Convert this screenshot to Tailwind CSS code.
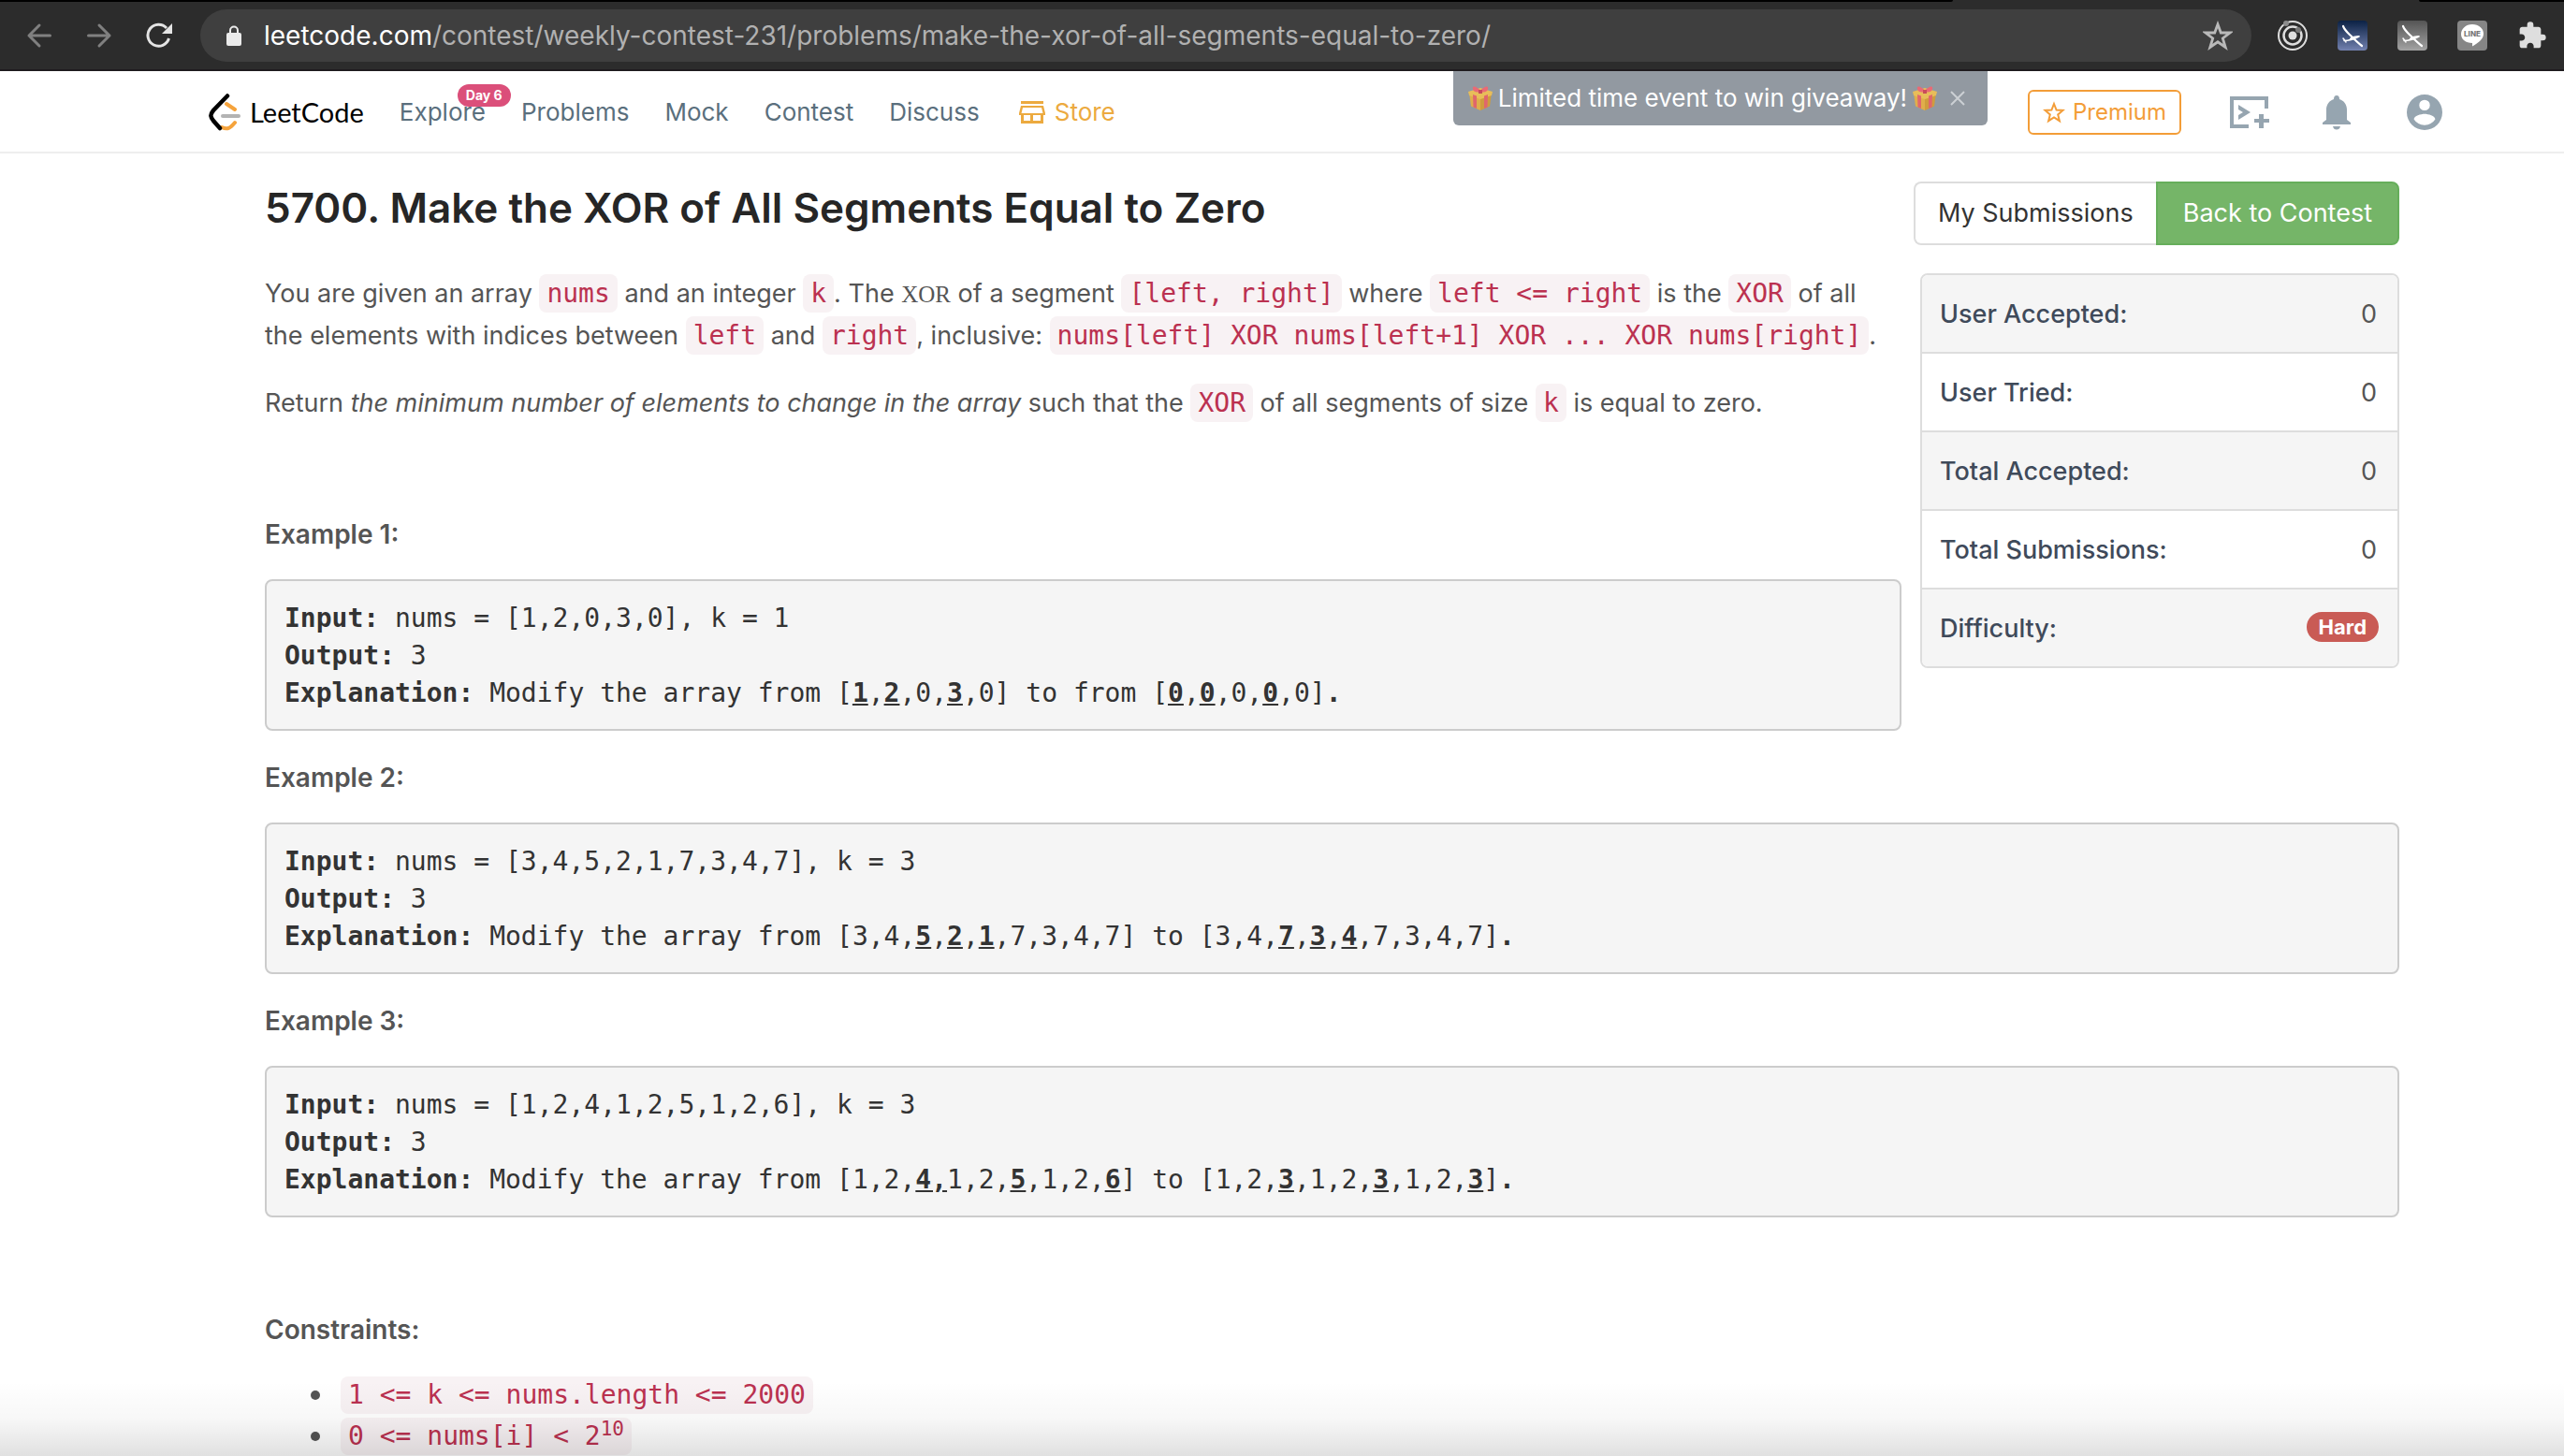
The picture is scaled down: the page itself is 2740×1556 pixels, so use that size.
<!DOCTYPE html>
<html lang="en">
<head>
<meta charset="utf-8">
<title>Make the XOR of All Segments Equal to Zero - LeetCode</title>
<script src="https://cdn.jsdelivr.net/npm/@tailwindcss/browser@4"></script>
</head>
<body class="relative flex h-screen flex-col overflow-hidden bg-white font-['Inter',sans-serif] text-[27px] leading-[44px] text-[#555]">

<svg class="hidden" aria-hidden="true">
  <symbol id="gift" viewBox="0 0 26 26">
    <path d="M1 7 13 11v15L3 21.500z" fill="#dfae4b"/>
    <path d="M25 7 13 11v15l10-4.500z" fill="#cf9c3d"/>
    <path d="M0 6 13 2l13 4-1 4-12 4L1 10z" fill="#e8bd59"/>
    <path d="m5 9 4 1.500v13.500l-3.500-1.500zM21 9l-4 1.500v13.500l3.500-1.500z" fill="#e0666c"/>
    <path d="M13 5C9 0 4-1 5 3c0 3 4 4 8 3 4 1 8 0 8-3 1-4-4-3-8 2z" fill="#ea6a75"/>
    <path d="M11 4h4v4h-4z" fill="#c94c5b"/>
  </symbol>
  <symbol id="glider" viewBox="0 0 32 32">
    <path d="M6 6c2 5 5 7 9 11 4 4 7 7 11 10" fill="none" stroke="#fff" stroke-width="2.200" stroke-linecap="round"/>
    <path d="M6 19l3 4M7 21.500c6 0 11-2 16-4.500" fill="none" stroke="#fff" stroke-width="1.500" stroke-linecap="round"/>
    <path d="M13 19c2-2 6-3 11-3-3 3-7 5-11 4.500z" fill="#fff"/>
  </symbol>
</svg>

<!-- Browser toolbar -->
<div class="relative flex h-[76px] shrink-0 items-center border-b-2 border-[#1f1c1f] bg-[#2c2c2c] pt-[2px] pr-[18px] pl-[28px]">
  <div class="absolute inset-x-0 top-0 flex h-[2px] justify-between">
    <div class="w-[2087px] rounded-br bg-black"></div>
    <div class="w-[155px] rounded-bl bg-black"></div>
  </div>
  <button aria-label="Back" class="mr-9"><svg class="size-7" viewBox="0 0 28 28" fill="none" stroke="#808080" stroke-width="3" stroke-linecap="round" stroke-linejoin="round"><path d="M25.500 14H3M14 3 3 14l11 11"/></svg></button>
  <button aria-label="Forward" class="mr-9"><svg class="size-7" viewBox="0 0 28 28" fill="none" stroke="#808080" stroke-width="3" stroke-linecap="round" stroke-linejoin="round"><path d="M2.500 14H25M14 3l11 11-11 11"/></svg></button>
  <button aria-label="Reload" class="mr-[30px]"><svg class="size-7" viewBox="0 0 28 28"><path d="M24.500 17A11.500 11.500 0 1 1 22 6" fill="none" stroke="#e4e4e4" stroke-width="3"/><path d="M28 1v11H17z" fill="#e4e4e4"/></svg></button>
  <div class="flex h-14 flex-1 items-center rounded-full bg-[#3f3f3f] pr-5 pl-7">
    <svg class="mr-6 h-[22px] w-4" viewBox="0 0 16 22"><path d="M4 9V5.500a4 4 0 0 1 8 0V9" fill="none" stroke="#ebebeb" stroke-width="2"/><rect y="8" width="16" height="14" rx="2" fill="#ebebeb"/></svg>
    <p class="flex-1 text-[28px] text-[#b1b1b1]"><span class="text-white">leetcode.com</span>/contest/weekly-contest-231/problems/make-the-xor-of-all-segments-equal-to-zero/</p>
    <button aria-label="Bookmark"><svg class="size-8" viewBox="0 0 32 32"><path d="m16 4 3.300 9H29l-7.700 6 2.900 9.500L16 22.800l-8.200 5.700 2.900-9.500L3 13h9.700z" fill="none" stroke="#b9b9b9" stroke-width="2.800"/></svg></button>
  </div>
  <div class="ml-7 flex items-center gap-8">
    <svg class="size-8" viewBox="0 0 32 32"><g fill="none" stroke="#dedede" stroke-width="2"><circle cx="16" cy="16" r="15"/><circle cx="16" cy="16" r="9.500" stroke-width="2.500"/></g><circle cx="16" cy="16" r="4.500" fill="#dedede"/><circle cx="9" cy="3" r="3" fill="#8b8b8b"/><circle cx="22" cy="10" r="3" fill="#777"/></svg>
    <svg class="size-8 rounded bg-linear-to-b from-[#0b2245] to-[#7482b0]"><use href="#glider"/></svg>
    <svg class="size-8 rounded bg-linear-to-b from-[#555] to-[#a3a3a3]"><use href="#glider"/></svg>
    <div class="relative size-8 rounded bg-[#868686]">
      <svg class="size-8" viewBox="0 0 32 32"><path d="M16 4c7 0 12 4.500 12 10 0 6-6 10-12 13.500V24C9 24 4 20 4 14.500 4 9 9 4 16 4z" fill="#fff"/></svg>
      <span class="absolute inset-x-0 top-2 text-center text-[8px] leading-3 font-extrabold text-[#777]">LINE</span>
    </div>
    <svg class="size-8" viewBox="0 0 24 24" fill="#dedede"><path d="M20.500 11H19V7c0-1.100-.9-2-2-2h-4V3.500a2.500 2.500 0 0 0-5 0V5H4c-1.100 0-2 .9-2 2v3.800h1.500c1.500 0 2.700 1.200 2.700 2.700S5 16.200 3.500 16.200H2V20c0 1.100.9 2 2 2h3.800v-1.500c0-1.500 1.200-2.700 2.700-2.700s2.700 1.200 2.700 2.700V22H17c1.100 0 2-.9 2-2v-4h1.500a2.500 2.500 0 0 0 0-5z"/></svg>
  </div>
</div>

<!-- Site navigation -->
<header class="relative flex h-[88px] shrink-0 items-center border-b-2 border-[#eee] pt-[2px] pr-[130px] pl-[223px] text-[26px] text-[#5a6f7d]">
  <a href="#" class="mr-[38px] flex items-center gap-2 font-['Lato',sans-serif] text-[29px] text-black">
    <svg class="h-10 w-9" viewBox="0 0 36 40" fill="none" stroke-linecap="round" stroke-width="4">
      <path d="m19 11 9 6M28 31c-5 6-8 8-14 5" stroke="#f5a33c"/>
      <path d="M15 24h17" stroke="#b3b3b3"/>
      <path d="M20 2.500 5 18c-4 5-3 7 0 11l7 8" stroke="#000" stroke-width="4.500"/>
    </svg>
    LeetCode
  </a>
  <nav class="flex items-center gap-[38px]">
    <a href="#" class="relative">Explore<span class="absolute -top-2 left-[62px] rounded-full bg-[#db4f7a] px-[9px] text-[14px] leading-6 font-bold whitespace-nowrap text-white">Day 6</span></a>
    <a href="#">Problems</a>
    <a href="#">Mock</a>
    <a href="#">Contest</a>
    <a href="#">Discuss</a>
    <a href="#" class="ml-1 flex items-center gap-[10px] text-[#ecaa3f]">
      <svg class="h-6 w-7" viewBox="0 0 28 24"><path d="M2 0h24v3H2zM2 5h24l2 8v2h-2v9H2v-9H0v-2zm2 2-1.500 6h23L24 7zm1 8v6h7v-6zm10 0v6h8v-6z" fill="#ecaa3f" fill-rule="evenodd"/></svg>
      Store
    </a>
  </nav>
  <div class="ml-auto flex items-center">
    <a href="#" class="mr-[52px] flex h-12 items-center gap-2 rounded-md border-2 border-[#f39d38] px-[14px] text-[24px] text-[#f39d38]">
      <svg class="size-6" viewBox="0 0 24 24"><path d="m12 3 2.600 6.500 6.900.4-5.300 4.500 1.700 6.800L12 17.400l-5.900 3.800 1.700-6.800-5.300-4.500 6.900-.4z" fill="none" stroke="#f39d38" stroke-width="2"/></svg>
      Premium
    </a>
    <a href="#" aria-label="Playground" class="mr-[57px]"><svg class="h-[34px] w-[42px]" viewBox="0 0 42 34" fill="#96a5b0"><path d="M0 0h41v13h-4V4H4v26h16v4H0zM9 9l13 8-13 8v-5l5-3-5-3zM31 19h5v5h6v4h-6v6h-5v-6h-5v-4h5z"/></svg></a>
    <a href="#" aria-label="Notifications" class="mr-[60px]"><svg class="h-[38px] w-[30px]" viewBox="0 0 30 38" fill="#96a5b0"><path d="M15 1c2 0 3 1.500 3 4 5 1.500 8 6 8 11v11l4 3v2H0v-2l4-3V16c0-5 3-9.500 8-11 0-2.500 1-4 3-4zM11 34h8c-.5 2.500-2 3.500-4 3.500s-3.500-1-4-3.500z"/></svg></a>
    <a href="#" aria-label="Account"><svg class="size-[38px]" viewBox="2 2 20 20" fill="#96a5b0"><path d="M12 2a10 10 0 1 0 0 20 10 10 0 0 0 0-20zm0 3a3 3 0 1 1 0 6 3 3 0 0 1 0-6zm0 14.200a7.200 7.200 0 0 1-6-3.200c0-2 4-3.100 6-3.100s6 1.100 6 3.100a7.200 7.200 0 0 1-6 3.200z"/></svg></a>
  </div>
  <!-- Event banner hanging over the navigation -->
  <div class="absolute top-0 right-[616px] flex h-[58px] items-center gap-[6px] rounded-b-md bg-[#9299a1] pr-6 pl-4 text-white">
    <svg class="size-[26px]"><use href="#gift"/></svg>
    <span class="whitespace-nowrap">Limited time event to win giveaway!</span>
    <svg class="size-[26px]"><use href="#gift"/></svg>
    <button aria-label="Dismiss" class="ml-2"><svg class="size-4" viewBox="0 0 16 16" stroke="#ccd0d4" stroke-width="2"><path d="m1 1 14 14M15 1 1 15"/></svg></button>
  </div>
</header>

<main class="pt-[30px] pr-[176px] pl-[283px]">
  <div class="flex items-start justify-between">
    <h1 class="text-[44px] leading-14 font-semibold text-[#262626]">5700. Make the XOR of All Segments Equal to Zero</h1>
    <div class="flex h-[68px]">
      <button class="rounded-l-lg border-2 border-r-0 border-[#ddd] px-6 text-[#333]">My Submissions</button>
      <button class="rounded-r-lg border-2 border-[#66ae5b] bg-[#75b568] px-[27px] text-white">Back to Contest</button>
    </div>
  </div>

  <div class="mt-[30px] flex items-start gap-5">
    <div class="min-w-0 flex-1">
      <p class="mb-7 pr-3">You are given an array <code class="rounded-lg bg-[#f8f2f4] px-2 py-1 font-['DejaVu_Sans_Mono',monospace] text-[28px] text-[#bb3150]">nums</code> and an integer <code class="rounded-lg bg-[#f8f2f4] px-2 py-1 font-['DejaVu_Sans_Mono',monospace] text-[28px] text-[#bb3150]">k</code>. The <code class="font-['Liberation_Serif',serif] text-[25px]">XOR</code> of a segment <code class="rounded-lg bg-[#f8f2f4] px-2 py-1 font-['DejaVu_Sans_Mono',monospace] text-[28px] text-[#bb3150]">[left, right]</code> where <code class="rounded-lg bg-[#f8f2f4] px-2 py-1 font-['DejaVu_Sans_Mono',monospace] text-[28px] text-[#bb3150]">left &lt;= right</code> is the <code class="rounded-lg bg-[#f8f2f4] px-2 py-1 font-['DejaVu_Sans_Mono',monospace] text-[28px] text-[#bb3150]">XOR</code> of all the elements with indices between <code class="rounded-lg bg-[#f8f2f4] px-2 py-1 font-['DejaVu_Sans_Mono',monospace] text-[28px] text-[#bb3150]">left</code> and <code class="rounded-lg bg-[#f8f2f4] px-2 py-1 font-['DejaVu_Sans_Mono',monospace] text-[28px] text-[#bb3150]">right</code>, inclusive: <code class="rounded-lg bg-[#f8f2f4] px-2 py-1 font-['DejaVu_Sans_Mono',monospace] text-[28px] whitespace-nowrap text-[#bb3150]">nums[left] XOR nums[left+1] XOR ... XOR nums[right]</code>.</p>
      <p class="mb-24">Return <em>the minimum number of elements to change in the array</em> such that the <code class="rounded-lg bg-[#f8f2f4] px-2 py-1 font-['DejaVu_Sans_Mono',monospace] text-[28px] text-[#bb3150]">XOR</code> of all segments of size <code class="rounded-lg bg-[#f8f2f4] px-2 py-1 font-['DejaVu_Sans_Mono',monospace] text-[28px] text-[#bb3150]">k</code> is equal to zero.</p>
      <p class="mb-[26px] text-[28px] font-semibold">Example 1:</p>
      <pre class="rounded-lg border-2 border-[#ccc] bg-[#f5f5f5] px-[19px] pt-5 pb-[18px] font-['DejaVu_Sans_Mono',monospace] text-[28px] leading-10 text-[#333]"><b>Input:</b> nums = [1,2,0,3,0], k = 1
<b>Output:</b> 3
<b>Explanation:</b> Modify the array from [<b><u>1</u></b>,<b><u>2</u></b>,0,<b><u>3</u></b>,0] to from [<b><u>0</u></b>,<b><u>0</u></b>,0,<b><u>0</u></b>,0]<b>.</b></pre>
    </div>
    <aside class="w-[512px] shrink-0 overflow-hidden rounded-lg border-2 border-[#ddd]">
      <dl class="divide-y-2 divide-[#ddd]">
        <div class="flex h-[84px] items-center justify-between bg-[#f5f5f5] pt-[2px] pr-[22px] pl-[19px]"><dt class="font-medium text-[#3f4a5a]">User Accepted:</dt><dd>0</dd></div>
        <div class="flex h-[84px] items-center justify-between pt-[2px] pr-[22px] pl-[19px]"><dt class="font-medium text-[#3f4a5a]">User Tried:</dt><dd>0</dd></div>
        <div class="flex h-[84px] items-center justify-between bg-[#f5f5f5] pt-[2px] pr-[22px] pl-[19px]"><dt class="font-medium text-[#3f4a5a]">Total Accepted:</dt><dd>0</dd></div>
        <div class="flex h-[84px] items-center justify-between pt-[2px] pr-[22px] pl-[19px]"><dt class="font-medium text-[#3f4a5a]">Total Submissions:</dt><dd>0</dd></div>
        <div class="flex h-[82px] items-center justify-between bg-[#f5f5f5] pt-[2px] pr-5 pl-[19px]"><dt class="font-medium text-[#3f4a5a]">Difficulty:</dt><dd class="mb-1 rounded-full bg-[#c95b55] px-[13px] text-[22px] leading-8 font-bold text-white">Hard</dd></div>
      </dl>
    </aside>
  </div>

  <p class="mt-7 mb-[26px] text-[28px] font-semibold">Example 2:</p>
  <pre class="rounded-lg border-2 border-[#ccc] bg-[#f5f5f5] px-[19px] pt-5 pb-[18px] font-['DejaVu_Sans_Mono',monospace] text-[28px] leading-10 text-[#333]"><b>Input:</b> nums = [3,4,5,2,1,7,3,4,7], k = 3
<b>Output:</b> 3
<b>Explanation:</b> Modify the array from [3,4,<b><u>5</u></b>,<b><u>2</u></b>,<b><u>1</u></b>,7,3,4,7] to [3,4,<b><u>7</u></b>,<b><u>3</u></b>,<b><u>4</u></b>,7,3,4,7]<b>.</b></pre>
  <p class="mt-7 mb-[26px] text-[28px] font-semibold">Example 3:</p>
  <pre class="rounded-lg border-2 border-[#ccc] bg-[#f5f5f5] px-[19px] pt-5 pb-[18px] font-['DejaVu_Sans_Mono',monospace] text-[28px] leading-10 text-[#333]"><b>Input:</b> nums = [1,2,4,1,2,5,1,2,6], k = 3
<b>Output:</b> 3
<b>Explanation:</b> Modify the array from [1,2,<b><u>4,</u></b>1,2,<b><u>5</u></b>,1,2,<b><u>6</u></b>] to [1,2,<b><u>3</u></b>,1,2,<b><u>3</u></b>,1,2,<b><u>3</u></b>]<b>.</b></pre>

  <p class="mt-[98px] mb-[26px] text-[28px] font-semibold">Constraints:</p>
  <ul class="pl-[49px]">
    <li class="flex items-center gap-[22px] before:size-[10px] before:rounded-full before:bg-[#555]"><code class="rounded-lg bg-[#f8f2f4] px-2 font-['DejaVu_Sans_Mono',monospace] text-[28px] leading-10 text-[#bb3150] my-[2px]">1 &lt;= k &lt;= nums.length &lt;= 2000</code></li>
    <li class="flex items-center gap-[22px] before:size-[10px] before:rounded-full before:bg-[#555]"><code class="rounded-lg bg-[#f8f2f4] px-2 font-['DejaVu_Sans_Mono',monospace] text-[28px] leading-10 text-[#bb3150] my-[2px]">0 &lt;= nums[i] &lt; 2<sup class="text-[21px]">10</sup></code></li>
  </ul>
</main>

<!-- Shade along the bottom edge of the window -->
<div class="pointer-events-none absolute inset-x-0 bottom-0 h-20 bg-linear-to-b from-transparent via-black/3 to-black/12"></div>
</body>
</html>
